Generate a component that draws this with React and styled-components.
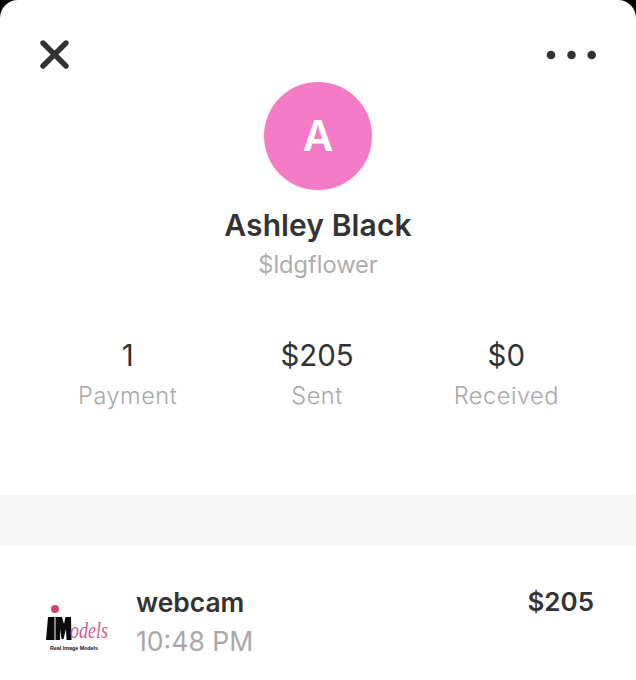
import React from "react";
import styled, { createGlobalStyle } from "styled-components";

const Global = createGlobalStyle`
  html, body { margin: 0; padding: 0; background: #000; }
  body { font-family: Inter, "Liberation Sans", sans-serif; }
`;
const Sheet = styled.main`
  width: 636px; height: 680px; background: #fff; border-radius: 18px 18px 0 0;
  overflow: hidden; display: flex; flex-direction: column;
`;
const TopBar = styled.header`
  height: 82px; flex: none; display: flex; justify-content: space-between; align-items: flex-start;
  padding: 39px 39px 0 39px; box-sizing: border-box;
`;
const Profile = styled.section`
  display: flex; flex-direction: column; align-items: center;
`;
const Avatar = styled.div`
  width: 108px; height: 108px; border-radius: 50%; background: #f57ac5; color: #fff;
  display: flex; align-items: center; justify-content: center;
  font-size: 42px; font-weight: 600; line-height: 1;
`;
const Name = styled.h1`
  margin: 16px 0 0; font-size: 30px; line-height: 38px; font-weight: 600; color: #333;
  letter-spacing: 0.1px;
`;
const Handle = styled.div`
  margin-top: 7px; font-size: 23.6px; line-height: 28px; color: #adadad; font-weight: 400;
`;
const Stats = styled.section`
  margin-top: 59px; display: grid; grid-template-columns: 1fr 1fr 1fr; padding: 0 35px 0 33px;
`;
const Stat = styled.div`
  display: flex; flex-direction: column; align-items: center;
`;
const StatValue = styled.div`
  font-size: 29.4px; line-height: 36px; color: #333; font-weight: 400;
`;
const StatLabel = styled.div`
  margin-top: 8px; font-size: 23.6px; line-height: 28px; color: #a8a8a8; font-weight: 300; letter-spacing: 0.5px;
`;
const Divider = styled.div`
  margin-top: 85px; height: 51px; flex: none; background: #f7f7f7;
`;
const Row = styled.section`
  display: flex; align-items: flex-start; padding: 40px 42px 0 44px;
`;
const Logo = styled.svg`
  width: 68px; height: 56px; flex: none; margin-top: 14px; overflow: visible;
`;
const RowText = styled.div`
  margin-left: 24px; flex: 1; display: flex; flex-direction: column;
`;
const Title = styled.div`
  font-size: 26.4px; line-height: 32px; font-weight: 600; color: #333;
`;
const Time = styled.div`
  margin-top: 7px; font-size: 26.6px; line-height: 32px; color: #a8a8a8; font-weight: 400;
`;
const Amount = styled.div`
  font-size: 26px; line-height: 32px; font-weight: 600; color: #333;
`;

export default function App() {
  return (
    <>
      <Global />
      <Sheet>
        <TopBar>
          <svg width="31" height="31" viewBox="0 0 31 31" aria-label="Close">
            <path d="M4 4 L27 27 M27 4 L4 27" stroke="#333" strokeWidth="5.4" strokeLinecap="round" />
          </svg>
          <svg width="51" height="10" viewBox="0 0 51 10" style={{ marginTop: 11 }} aria-label="More">
            <circle cx="5" cy="5" r="4.3" fill="#333" />
            <circle cx="25.5" cy="5" r="4.3" fill="#333" />
            <circle cx="45.7" cy="5" r="4.3" fill="#333" />
          </svg>
        </TopBar>
        <Profile>
          <Avatar>A</Avatar>
          <Name>Ashley Black</Name>
          <Handle>$ldgflower</Handle>
        </Profile>
        <Stats>
          <Stat><StatValue>1</StatValue><StatLabel>Payment</StatLabel></Stat>
          <Stat><StatValue>$205</StatValue><StatLabel>Sent</StatLabel></Stat>
          <Stat><StatValue>$0</StatValue><StatLabel>Received</StatLabel></Stat>
        </Stats>
        <Divider />
        <Row>
          <Logo viewBox="0 0 68 56">
            <circle cx="11" cy="9" r="4" fill="#d6436e" />
            <path d="M2 40 L4 17 H10.5 V40 Z M11.5 40 V17 H18 L20 24 L21.5 17 H27 L27.5 40 H22.5 L22 29 L19.5 39 H17.5 L16 29 V40 Z" fill="#0a0a0a" />
            <text x="26" y="38" fontFamily="'Liberation Serif', serif" fontStyle="italic" fontSize="24" fill="#cf5a8e" textLength="38" lengthAdjust="spacingAndGlyphs">odels</text>
            <text x="6" y="50" fontFamily="'Liberation Sans', sans-serif" fontWeight="700" fontSize="6" fill="#111" textLength="48" lengthAdjust="spacingAndGlyphs">Real Image Models</text>
          </Logo>
          <RowText>
            <Title>webcam</Title>
            <Time>10:48 PM</Time>
          </RowText>
          <Amount>$205</Amount>
        </Row>
      </Sheet>
    </>
  );
}
